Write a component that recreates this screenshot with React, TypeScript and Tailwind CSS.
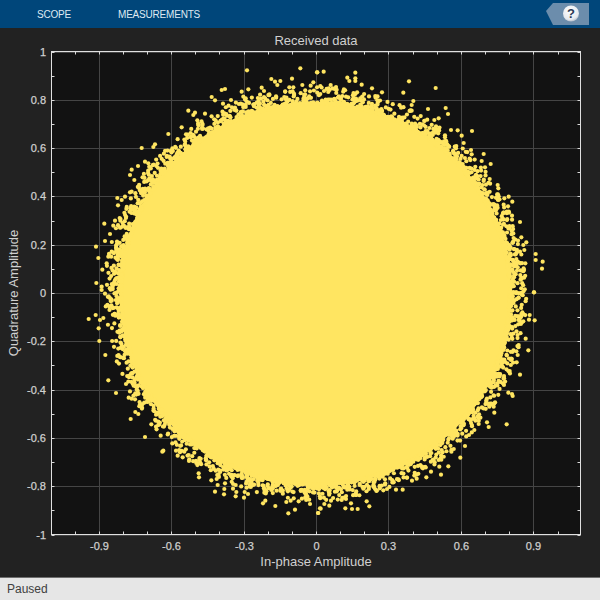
import React from "react";

// plot box in page pixels
const LEFT = 51.5;
const RIGHT = 580.5;
const TOP = 51.5;
const BOTTOM = 534.5;
const CX = 316;
const CY = 293;
const X_UNIT = 241.5; // px per 1.0 on the x axis
const Y_UNIT = 241.5; // px per 1.0 on the y axis

const xTicks = [-0.9, -0.6, -0.3, 0, 0.3, 0.6, 0.9];
const yTicks = [1, 0.8, 0.6, 0.4, 0.2, 0, -0.2, -0.4, -0.6, -0.8, -1];

const toX = (v: number) => Math.round(CX + v * X_UNIT) + 0.5;
const toY = (v: number) => Math.round(CY - v * Y_UNIT) + 0.5;

// stray dots read off the reference, as offsets inside four 3x crops
const crops: [number, number, number[]][] = [
  [80, 55, [501,46,661,40,711,52,574,72,636,71,585,80,601,78,592,90,667,90,700,82,692,92,545,98,552,108,505,103,485,110,425,105,435,102,568,118,628,97,640,97,395,126,405,136,453,135,490,125,497,130,429,146,325,167,345,173,340,180,375,176,352,196,265,237,305,217,185,279,225,268,220,276,155,344,174,333,150,360,163,375,195,320,205,325,112,429,135,425,114,451,73,506,105,497,119,489,90,537,75,558,48,575,55,609,67,644,49,684,65,695,65,705,75,716,155,410,150,412,125,435,100,512,120,518,85,605,95,590,80,625]],
  [316, 55, [4,52,23,50,118,53,94,68,118,70,118,78,100,78,137,89,279,79,359,99,262,113,13,93,44,90,60,96,198,112,168,100,292,138,287,150,336,162,389,159,396,177,287,167,468,228,437,242,425,226,443,264,503,297,497,318,524,327,507,337,521,372,545,390,547,400,578,425,565,430,548,424,589,440,563,449,576,454,612,501,588,482,616,547,631,562,622,570,659,597,659,615,680,620,678,641,628,625,654,712,605,620,612,590,625,585,368,190,355,195,405,225,465,285,467,298]],
  [80, 290, [26,87,47,75,56,115,58,153,70,84,60,90,76,195,85,271,108,309,138,282,152,387,166,366,175,372,195,441,247,485,250,482,146,323,155,326,165,328,187,343,214,403,228,410,242,437,288,482,293,497,308,502,327,513,313,485,357,562,356,550,394,571,410,567,413,585,405,605,433,597,432,613,467,619,469,606,459,596,492,623,494,606,504,612,549,640,556,632,586,648,625,670,645,659,656,634,632,632,619,636,690,642,714,669,720,655,467,585,435,580]],
  [316, 290, [654,7,641,75,656,91,639,89,622,72,629,146,637,181,612,254,602,217,605,195,608,165,581,243,564,258,577,308,588,312,590,318,572,403,535,368,513,397,518,411,488,402,475,420,459,435,447,468,433,503,397,529,375,554,345,545,331,562,302,566,288,572,260,599,240,599,213,597,202,601,191,590,178,598,160,649,152,634,125,657,108,657,88,655,105,640,90,627,77,630,40,647,25,642,14,656,7,669,45,632,377,480,370,530,368,510,533,350,520,350]],
];

const strayDots: [number, number][] = [];
crops.forEach(([ox, oy, list]) => {
  for (let i = 0; i < list.length; i += 2) {
    strayDots.push([ox + list[i] / 3, oy + list[i + 1] / 3]);
  }
});

// fuzzy rim of the cloud, seeded so every run is the same
const rimDots: [number, number][] = [];
let seed = 12345;
const rand = () => {
  seed = (seed * 16807) % 2147483647;
  return seed / 2147483647;
};
for (let i = 0; i < 2800; i++) {
  const angle = rand() * Math.PI * 2;
  const s = 0.97 + 0.085 * Math.pow(rand(), 2.6);
  rimDots.push([315.5 + 200 * s * Math.cos(angle), 294 + 196 * s * Math.sin(angle)]);
}

const range = (n: number) => Array.from({ length: n }, (_, i) => i);

const ScopePlot = () => (
  <svg viewBox="0 28 600 549" className="block w-[600px] h-[549px]" style={{ fontFamily: '"Liberation Sans", Arial, sans-serif' }}>
    <rect x={LEFT} y={TOP} width={RIGHT - LEFT} height={BOTTOM - TOP} fill="#121212" />

    {/* Grid */}
    {xTicks.map((v) => (
      <line key={v} x1={toX(v)} x2={toX(v)} y1={TOP} y2={BOTTOM} stroke="#454545" />
    ))}
    {yTicks.map((v) => (
      <line key={v} x1={LEFT} x2={RIGHT} y1={toY(v)} y2={toY(v)} stroke="#454545" />
    ))}

    {/* Ticks */}
    {range(21).map((i) => {
      const x = toX(-1 + i * 0.1);
      return (
        <g key={i} stroke="#d8d8d8">
          <line x1={x} x2={x} y1={TOP} y2={TOP + 3} />
          <line x1={x} x2={x} y1={BOTTOM} y2={BOTTOM - 3} />
        </g>
      );
    })}
    {range(21).map((i) => {
      const y = toY(-1 + i * 0.1);
      return (
        <g key={i} stroke="#d8d8d8">
          <line x1={LEFT} x2={LEFT + 3} y1={y} y2={y} />
          <line x1={RIGHT} x2={RIGHT - 3} y1={y} y2={y} />
        </g>
      );
    })}

    {/* Data */}
    <ellipse cx={315.5} cy={294} rx={196} ry={192} fill="#ffe561" />
    {rimDots.map(([x, y], i) => (
      <circle key={i} cx={x} cy={y} r={2.1} fill="#ffe561" />
    ))}
    {strayDots.map(([x, y], i) => (
      <circle key={i} cx={x} cy={y} r={2.1} fill="#ffe561" />
    ))}

    <rect x={LEFT} y={TOP} width={RIGHT - LEFT} height={BOTTOM - TOP} fill="none" stroke="#e0e0e0" />

    {/* Tick labels */}
    <g fill="#d0d0d0" stroke="#d0d0d0" strokeWidth={0.25}>
      {xTicks.map((v) => (
        <text key={v} x={toX(v)} y={550} textAnchor="middle" fontSize={11}>
          {v}
        </text>
      ))}
      {yTicks.map((v) => (
        <text key={v} x={46} y={toY(v) + 3} textAnchor="end" fontSize={11}>
          {v}
        </text>
      ))}
    </g>

    <g fill="#d0d0d0" fontSize={13}>
      <text x={316} y={45} textAnchor="middle">Received data</text>
      <text x={316} y={566} textAnchor="middle">In-phase Amplitude</text>
      <text x={18} y={293} textAnchor="middle" transform="rotate(-90 18 293)">Quadrature Amplitude</text>
    </g>
  </svg>
);

const HelpTab = () => (
  <svg width="44" height="24" viewBox="0 0 44 24" className="shrink-0">
    <polygon points="0,11 7,3 43,3 43,25 7,25" fill="#6c8dac" transform="translate(0,-2)" />
    <defs>
      <radialGradient id="helpBall" cx="0.45" cy="0.35" r="0.75">
        <stop offset="0" stopColor="#ffffff" />
        <stop offset="0.7" stopColor="#e6e9ee" />
        <stop offset="1" stopColor="#8f9cae" />
      </radialGradient>
    </defs>
    <circle cx="25" cy="11.5" r="8" fill="url(#helpBall)" />
    <text x="25" y="16" textAnchor="middle" fontSize="13" fontWeight="700" fill="#2d3a55" style={{ fontFamily: '"Liberation Sans", Arial, sans-serif' }}>?</text>
  </svg>
);

export default function App() {
  return (
    <div className="w-[600px] h-[600px] flex flex-col overflow-hidden bg-[#222222] font-['Liberation_Sans',Arial,sans-serif]">
      {/* Toolstrip */}
      <div className="h-7 shrink-0 flex items-center bg-[#00467a] pl-[37px] pr-[10px]">
        <span className="text-[10px] tracking-[-0.2px] text-[#dfe9f2] w-[81px]">SCOPE</span>
        <span className="text-[10px] tracking-[-0.2px] text-[#dfe9f2]">MEASUREMENTS</span>
        <div className="ml-auto">
          <HelpTab />
        </div>
      </div>

      <ScopePlot />

      {/* Status bar */}
      <div className="h-[23px] shrink-0 flex items-center px-[7px] bg-[#e6e6e6] border-t border-[#6e6e6e] text-xs text-[#404040]">
        Paused
      </div>
    </div>
  );
}
